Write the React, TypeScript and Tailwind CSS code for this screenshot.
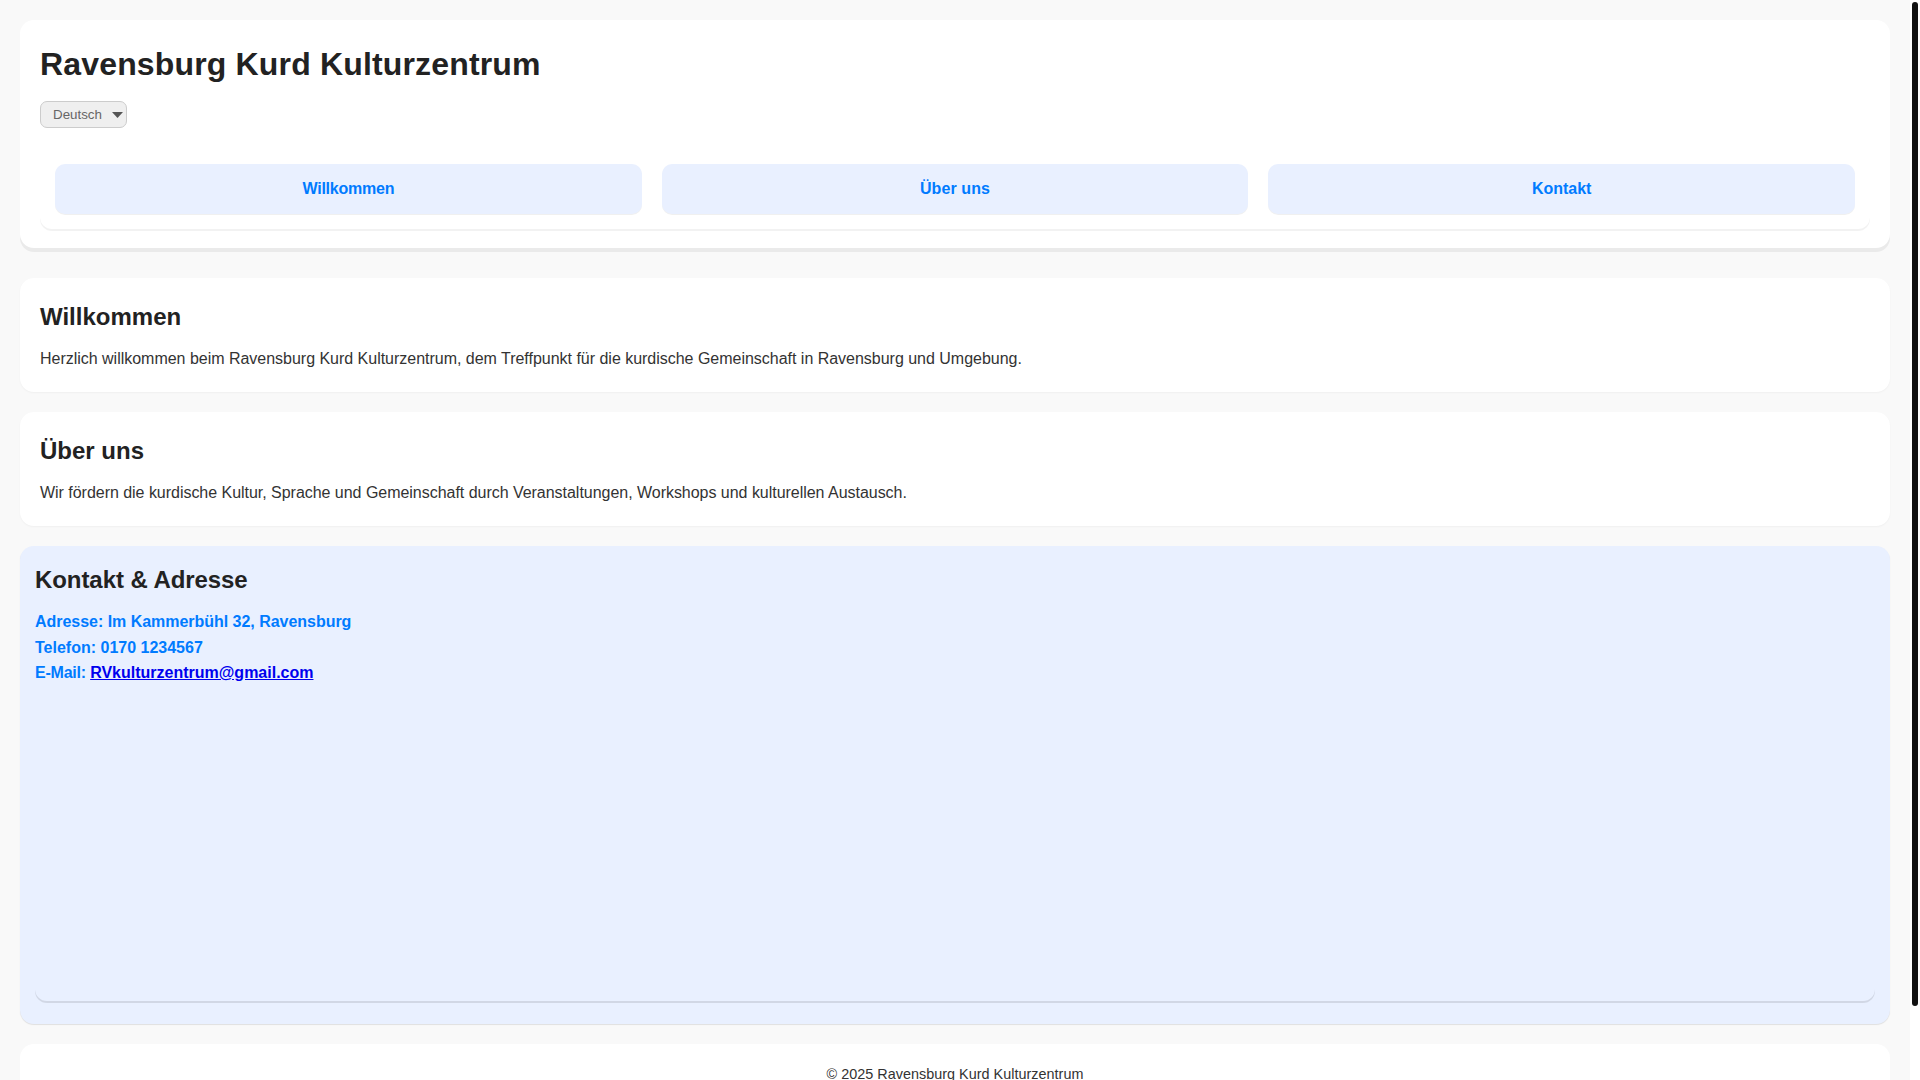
const navItems = [
  { label: "Willkommen", cls: "tracking-[-0.24px]" },
  { label: "Über uns", cls: "tracking-[0.1px]" },
  { label: "Kontakt", cls: "tracking-normal" },
];

export default function App() {
  return (
    <div className="flex h-screen overflow-hidden bg-white font-['Arial','Liberation_Sans',sans-serif] text-[#222222]">
      <div className="min-w-0 flex-1 overflow-hidden bg-[#f9f9f9]">
        <header className="mx-5 mt-5 rounded-[14px] bg-white px-5 pb-[19px] pt-5 shadow-[0_4px_0_rgba(0,0,0,0.06)]">
          <h1 className="mt-[6px] text-[32px] font-bold leading-[37px] tracking-[0.16px]">Ravensburg Kurd Kulturzentrum</h1>
          <div className="relative mt-[18px] w-[87px]">
            <select className="block h-[27px] w-[87px] appearance-none rounded-[7px] border border-solid border-[#cccccc] bg-[#efefef] pl-3 text-[13.33px] text-[#666666] outline-none">
              <option>Deutsch</option>
            </select>
            <svg className="absolute right-[4px] top-[11px]" width="11" height="6" viewBox="0 0 11 6"><path d="M0 0H11L5.5 6Z" fill="#555555" /></svg>
          </div>
          <nav className="mt-[36px] flex gap-5 rounded-[12px] bg-white px-[15px] pb-[15px] shadow-[0_2px_0_rgba(0,0,0,0.05)]">
            {navItems.map((t) => (
              <a key={t.label} className={`flex h-[50px] flex-1 items-center justify-center rounded-[10px] bg-[#e9f0ff] text-[16px] font-bold text-[#007bff] shadow-[0_1px_0_rgba(0,0,0,0.06)] ${t.cls}`}>{t.label}</a>
            ))}
          </nav>
        </header>
        <section className="mx-5 mt-[30px] h-[114px] rounded-[14px] bg-white px-5 pt-[25px] shadow-[0_1px_2px_rgba(0,0,0,0.04)]">
          <h2 className="text-[24px] font-bold leading-[28px]">Willkommen</h2>
          <p className="mt-[16px] text-[16px] leading-[24px] tracking-[-0.018px] text-[#333333]">Herzlich willkommen beim Ravensburg Kurd Kulturzentrum, dem Treffpunkt für die kurdische Gemeinschaft in Ravensburg und Umgebung.</p>
        </section>
        <section className="mx-5 mt-5 h-[114px] rounded-[14px] bg-white px-5 pt-[25px] shadow-[0_1px_2px_rgba(0,0,0,0.04)]">
          <h2 className="text-[24px] font-bold leading-[28px]">Über uns</h2>
          <p className="mt-[16px] text-[16px] leading-[24px] tracking-[-0.03px] text-[#333333]">Wir fördern die kurdische Kultur, Sprache und Gemeinschaft durch Veranstaltungen, Workshops und kulturellen Austausch.</p>
        </section>
        <section className="mx-5 mt-5 h-[478px] rounded-[14px] bg-[#e9f0ff] px-[15px] pt-[20px] shadow-[0_1px_1px_rgba(0,0,0,0.1)]">
          <h2 className="text-[24px] font-bold leading-[28px] tracking-[-0.07px]">Kontakt &amp; Adresse</h2>
          <div className="mt-[15px] text-[16px] font-bold leading-[25.5px] text-[#007bff]">
            <p className="tracking-[-0.03px]">Adresse: Im Kammerbühl 32, Ravensburg</p>
            <p>Telefon: 0170 1234567</p>
            <p><span className="tracking-[-0.22px]">E-Mail: </span><a href="#" className="text-[#0000ee] underline">RVkulturzentrum@gmail.com</a></p>
          </div>
          <div className="mt-[15.5px] h-[300px] rounded-[12px] shadow-[0_2px_0_rgba(0,0,0,0.1)]" />
        </section>
        <footer className="mx-5 mb-5 mt-5 rounded-[14px] bg-white pb-5 pt-[22px] text-center text-[14.4px] leading-[17px] tracking-[0.02px] text-[#333333]">
          © 2025 Ravensburg Kurd Kulturzentrum
        </footer>
      </div>
      <div className="w-[10px] shrink-0 bg-white px-[2px] py-[2px]">
        <div className="h-[1004px] rounded-[3px] bg-[#111111]" />
      </div>
    </div>
  );
}
